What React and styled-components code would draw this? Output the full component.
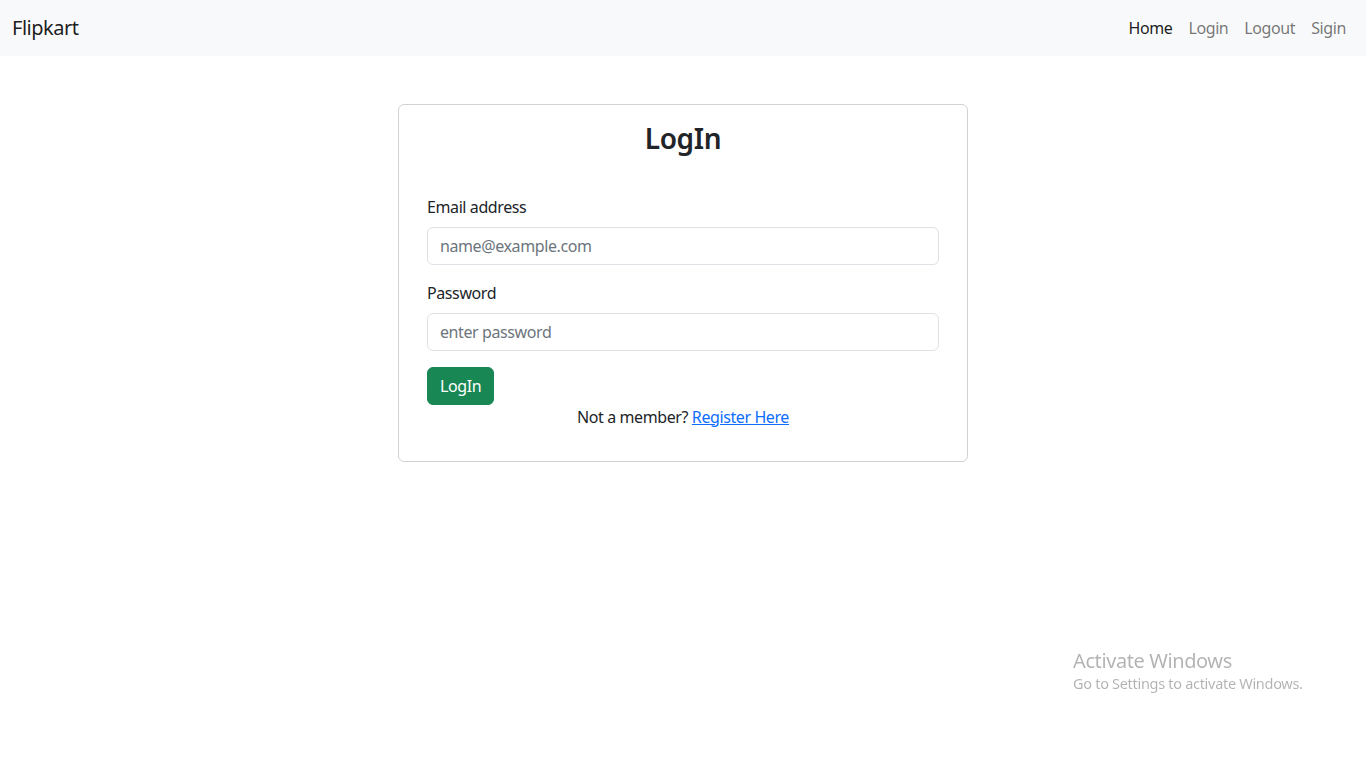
import React from 'react'
import styled, { createGlobalStyle } from 'styled-components'

const GlobalStyle = createGlobalStyle`
  * { box-sizing: border-box; }
  body {
    margin: 0;
    font-family: "Segoe UI", "Noto Sans", "Open Sans", sans-serif;
    font-size: 16px;
    line-height: 1.5;
    letter-spacing: -0.4px;
    color: #212529;
    background: #fff;
  }
`

const Navbar = styled.nav`
  height: 56px;
  background: #f8f9fa;
  display: flex;
  align-items: center;
  justify-content: space-between;
  padding: 0 12px;
`

const Brand = styled.a`
  font-size: 20px;
  color: rgba(0, 0, 0, 0.9);
  text-decoration: none;
  line-height: 30px;
  letter-spacing: -0.5px;
`

const NavList = styled.ul`
  display: flex;
  list-style: none;
  margin: 0;
  padding: 0;
`

const NavLink = styled.a`
  display: block;
  padding: 8px;
  color: ${p => (p.active ? 'rgba(0, 0, 0, 0.9)' : 'rgba(0, 0, 0, 0.55)')};
  text-decoration: none;
`

const Main = styled.main`
  display: flex;
  justify-content: center;
  padding-top: 48px;
`

const Card = styled.div`
  width: 570px;
  border: 1px solid rgba(0, 0, 0, 0.175);
  border-radius: 6px;
  padding: 17px 28px 32px;
`

const Title = styled.h3`
  margin: 0 0 39px;
  text-align: center;
  font-size: 28px;
  font-weight: 600;
  line-height: 1.2;
`

const Field = styled.div`
  margin-bottom: 16px;
`

const Label = styled.label`
  display: block;
  margin-bottom: 8px;
`

const Input = styled.input`
  display: block;
  width: 100%;
  height: 38px;
  padding: 6px 12px;
  font: inherit;
  letter-spacing: inherit;
  color: #212529;
  border: 1px solid #dee2e6;
  border-radius: 6px;
  outline: none;
  &::placeholder {
    color: #6c757d;
  }
`

const Button = styled.button`
  height: 38px;
  padding: 6px 12px;
  font: inherit;
  letter-spacing: inherit;
  color: #fff;
  background: #198754;
  border: 1px solid #198754;
  border-radius: 6px;
`

const Footer = styled.p`
  margin: 0;
  text-align: center;
`

const Register = styled.a`
  color: #0d6efd;
  text-decoration: underline;
`

const Watermark = styled.div`
  position: fixed;
  left: 1073px;
  top: 649px;
  color: rgba(0, 0, 0, 0.3);
  font-family: "Segoe UI", "Noto Sans", sans-serif;
  line-height: 1.2;
`

const WatermarkTitle = styled.div`
  font-size: 20px;
  letter-spacing: -0.4px;
`

const WatermarkText = styled.div`
  font-size: 14.5px;
  margin-top: 2px;
  letter-spacing: -0.3px;
`

export default function App() {
  return (
    <>
      <GlobalStyle />
      <Navbar>
        <Brand href="#">Flipkart</Brand>
        <NavList>
          <li><NavLink href="#" active>Home</NavLink></li>
          <li><NavLink href="#">Login</NavLink></li>
          <li><NavLink href="#">Logout</NavLink></li>
          <li><NavLink href="#">Sigin</NavLink></li>
        </NavList>
      </Navbar>
      <Main>
        <Card>
          <Title>LogIn</Title>
          <Field>
            <Label htmlFor="email">Email address</Label>
            <Input id="email" type="email" placeholder="name@example.com" />
          </Field>
          <Field>
            <Label htmlFor="password">Password</Label>
            <Input id="password" type="password" placeholder="enter password" />
          </Field>
          <Button type="button">LogIn</Button>
          <Footer>
            Not a member? <Register href="#">Register Here</Register>
          </Footer>
        </Card>
      </Main>
      <Watermark>
        <WatermarkTitle>Activate Windows</WatermarkTitle>
        <WatermarkText>Go to Settings to activate Windows.</WatermarkText>
      </Watermark>
    </>
  )
}
